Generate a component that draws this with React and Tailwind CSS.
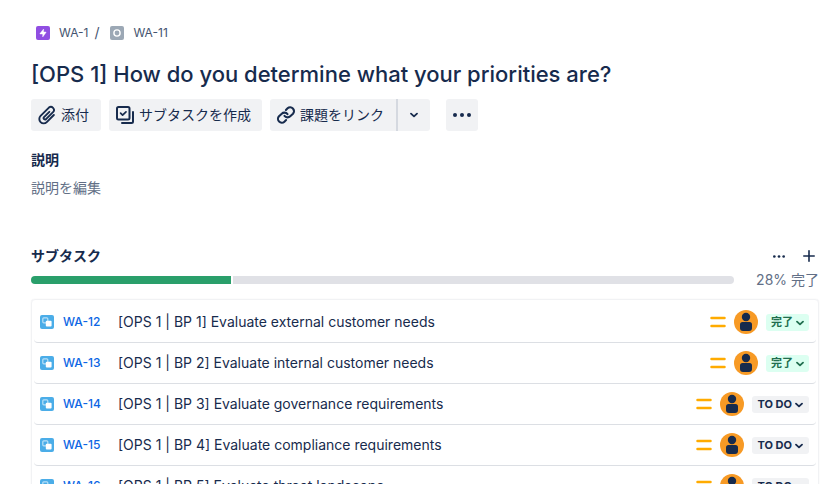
import React from 'react';

const subtasks = [
  { id: 'WA-12', title: '[OPS 1 | BP 1] Evaluate external customer needs', done: true },
  { id: 'WA-13', title: '[OPS 1 | BP 2] Evaluate internal customer needs', done: true },
  { id: 'WA-14', title: '[OPS 1 | BP 3] Evaluate governance requirements', done: false },
  { id: 'WA-15', title: '[OPS 1 | BP 4] Evaluate compliance requirements', done: false },
  { id: 'WA-16', title: '[OPS 1 | BP 5] Evaluate threat landscape', done: false },
];

const EpicIcon = () => (
  <svg className="size-3.5 shrink-0" viewBox="0 0 14 14" aria-hidden="true">
    <rect width="14" height="14" rx="2" fill="#904ee2" />
    <path d="M7.6 3v3h2.2c.3 0 .4.3.2.6L6.7 11V8H4.3c-.3 0-.5-.3-.3-.6z" fill="#fff" stroke="#fff" strokeWidth="0.4" />
  </svg>
);

const TaskIcon = () => (
  <svg className="size-3.5 shrink-0" viewBox="0 0 14 14" aria-hidden="true">
    <rect width="14" height="14" rx="2" fill="#9ca8b5" />
    <circle cx="7" cy="7" r="3.1" fill="none" stroke="#fff" strokeWidth="1.4" />
  </svg>
);

const SubtaskIcon = () => (
  <svg className="size-3.5 shrink-0" viewBox="0 0 14 14" aria-hidden="true">
    <rect width="14" height="14" rx="2" fill="#4bade8" />
    <rect x="2.8" y="2.8" width="5" height="5" rx="1" fill="none" stroke="#b9e0f7" strokeWidth="1.2" />
    <rect x="5.8" y="5.8" width="5.8" height="5.6" rx="1" fill="#fff" />
  </svg>
);

const AttachIcon = () => (
  <svg className="size-5 shrink-0" viewBox="0 0 24 24" fill="none" stroke="currentColor" strokeWidth="2.3" strokeLinecap="round" strokeLinejoin="round" aria-hidden="true">
    <path d="M14.8 8.2 8.4 14.6a1.7 1.7 0 0 0 2.4 2.4l8.7-8.7a3.7 3.7 0 0 0-5.2-5.2l-10 10a5.2 5.2 0 0 0 7.4 7.4l8.5-8.5" />
  </svg>
);

const ChildIcon = () => (
  <svg className="size-5 shrink-0" viewBox="0 0 20 20" fill="none" stroke="currentColor" strokeWidth="2" strokeLinecap="round" strokeLinejoin="round" aria-hidden="true">
    <rect x="2" y="2" width="12.5" height="12.5" rx="1.5" />
    <path d="m5.6 8.2 2 2L11 6.8" strokeWidth="1.7" />
    <path d="M18 7v9.5a1.5 1.5 0 0 1-1.5 1.5H7" />
  </svg>
);

const LinkIcon = () => (
  <svg className="size-5 shrink-0" viewBox="0 0 24 24" fill="none" stroke="currentColor" strokeWidth="2.5" strokeLinecap="round" strokeLinejoin="round" aria-hidden="true">
    <path d="M10.2 13a4.6 4.6 0 0 0 6.900.5l3.300-3a4.600 4.600 0 0 0-6.500-6.500l-2 1.900" />
    <path d="M13.8 11a4.600 4.600 0 0 0-6.900-.5l-3.300 3a4.600 4.600 0 0 0 6.500 6.500l2-1.900" />
  </svg>
);

const ChevronIcon = () => (
  <svg className="size-2 shrink-0" viewBox="0 0 8 8" fill="none" stroke="currentColor" strokeWidth="1.8" strokeLinecap="round" strokeLinejoin="round" aria-hidden="true">
    <path d="M1 2.6 4 5.4l3-2.8" />
  </svg>
);

const MoreIcon = ({ className }) => (
  <svg className={className} viewBox="0 0 18 4" fill="currentColor" aria-hidden="true">
    <circle cx="2" cy="2" r="2" />
    <circle cx="9" cy="2" r="2" />
    <circle cx="16" cy="2" r="2" />
  </svg>
);

const PlusIcon = () => (
  <svg className="size-3" viewBox="0 0 12 12" fill="none" stroke="currentColor" strokeWidth="1.6" strokeLinecap="round" aria-hidden="true">
    <path d="M6 .8v10.4M.8 6h10.4" />
  </svg>
);

const PriorityIcon = () => (
  <svg className="h-3 w-4 shrink-0" viewBox="0 0 16 12" stroke="#ffab00" strokeWidth="2.5" strokeLinecap="round" role="img" aria-label="Medium">
    <path d="M1.5 2h13M1.5 10h13" />
  </svg>
);

const Avatar = () => (
  <svg className="size-6 shrink-0" viewBox="0 0 24 24" role="img" aria-label="User">
    <circle cx="12" cy="12" r="12" fill="#f79a25" />
    <circle cx="12" cy="7" r="4.2" fill="#172b4d" />
    <path d="M6 14.5A2.5 2.5 0 0 1 8.5 12h7a2.5 2.5 0 0 1 2.5 2.5V18a3 3 0 0 1-3 3H9a3 3 0 0 1-3-3z" fill="#172b4d" />
  </svg>
);

const SubtaskRow = ({ task }) => (
  <li className="mx-0.5 flex h-[41px] items-center rounded border-b border-[#dcdfe4] pr-[7px] pl-1.5">
    <SubtaskIcon />
    <a href={`#${task.id}`} className="ml-[9px] w-[55px] shrink-0 text-xs font-medium text-[#0c66e4]">
      {task.id}
    </a>
    <span className="min-w-0 flex-1 truncate">{task.title}</span>
    <PriorityIcon />
    <span className="mx-2 flex">
      <Avatar />
    </span>
    <button
      className={`flex h-[17px] shrink-0 items-center gap-[3px] rounded-[3px] pt-0.5 text-[11px] font-bold ${
        task.done ? 'bg-[#dcfff1] px-[5px] text-[#216e4e]' : 'bg-[#f1f2f4] px-1.5 text-[#172b4d]'
      }`}
    >
      {task.done ? '完了' : 'TO DO'}
      <ChevronIcon />
    </button>
  </li>
);

const App = () => {
  const percent = 28;

  return (
    <main className="h-screen overflow-hidden bg-white pt-6 pr-[13px] pl-[31px] font-['Inter','Noto_Sans_CJK_JP',sans-serif] text-sm text-[#172b4d]">
      <nav className="flex h-[18px] items-center pl-[5px] text-xs text-[#44546f]">
        <EpicIcon />
        <a href="#WA-1" className="ml-[9px]">WA-1</a>
        <span className="mr-[11px] ml-1.5 text-sm">/</span>
        <TaskIcon />
        <a href="#WA-11" className="ml-[9px]">WA-11</a>
      </nav>

      <h1 className="mt-[18px] text-[22px] leading-7 font-medium">
        [OPS 1] How do you determine what your priorities are?
      </h1>

      <div className="mt-[11px] flex h-8 gap-2">
        <button className="flex items-center gap-1 rounded-[3px] bg-[#f1f2f4] pr-3 pl-1.5">
          <AttachIcon />
          添付
        </button>
        <button className="flex items-center gap-1 rounded-[3px] bg-[#f1f2f4] pr-[11px] pl-1.5">
          <ChildIcon />
          サブタスクを作成
        </button>
        <div className="flex">
          <button className="flex items-center gap-1 rounded-l-[3px] bg-[#f1f2f4] pr-3 pl-1.5">
            <LinkIcon />
            課題をリンク
          </button>
          <button aria-label="リンクの種類" className="flex w-[34px] items-center justify-center rounded-r-[3px] border-l-2 border-[#d5d9e0] bg-[#f1f2f4]">
            <ChevronIcon />
          </button>
        </div>
        <button aria-label="その他" className="ml-2 flex w-8 items-center justify-center rounded-[3px] bg-[#f1f2f4]">
          <MoreIcon className="h-1 w-[18px]" />
        </button>
      </div>

      <section className="mt-[19px]">
        <h2 className="leading-5 font-bold">説明</h2>
        <p className="mt-2 leading-5 text-[#626f86]">説明を編集</p>
      </section>

      <section className="mt-12">
        <div className="flex items-center">
          <h2 className="flex-1 leading-5 font-bold">サブタスク</h2>
          <button aria-label="その他のアクション" className="mr-[18px]">
            <MoreIcon className="h-[3px] w-3" />
          </button>
          <button aria-label="サブタスクを追加" className="mr-1">
            <PlusIcon />
          </button>
        </div>

        <div className="mt-1 flex h-5 items-center">
          <div className="flex h-2 flex-1 gap-0.5 overflow-hidden rounded-full">
            <div className="bg-[#2a9f6b]" style={{ width: `${percent + 0.5}%` }} />
            <div className="flex-1 bg-[#e0e1e6]" />
          </div>
          <span className="ml-[22px] text-[#626f86]">{percent}% 完了</span>
        </div>

        <ul className="mt-[9px] rounded border border-[#f1f2f4] pt-0.5 shadow-[0_0_1px_#091e4222]">
          {subtasks.map((task) => (
            <SubtaskRow key={task.id} task={task} />
          ))}
        </ul>
      </section>
    </main>
  );
};

export default App;
